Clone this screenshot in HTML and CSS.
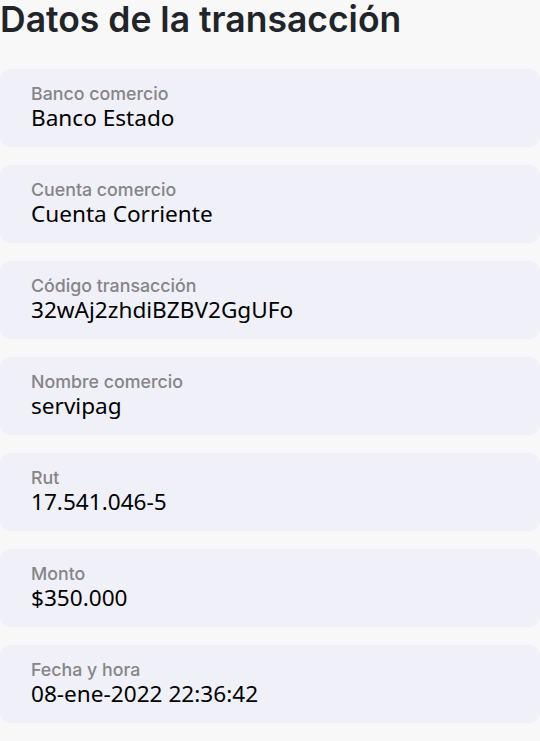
FILE: index.html
```html
<!DOCTYPE html>
<html lang="es">
<head>
<meta charset="utf-8">
<link rel="stylesheet" href="styles.css">
</head>
<body>
<main class="page">
  <h1 class="title">Datos de la transacción</h1>
  <div class="list">
    <div class="card"><div class="label">Banco comercio</div><div class="value">Banco Estado</div></div>
    <div class="card"><div class="label">Cuenta comercio</div><div class="value">Cuenta Corriente</div></div>
    <div class="card"><div class="label">Código transacción</div><div class="value">32wAj2zhdiBZBV2GgUFo</div></div>
    <div class="card"><div class="label">Nombre comercio</div><div class="value">servipag</div></div>
    <div class="card"><div class="label">Rut</div><div class="value">17.541.046-5</div></div>
    <div class="card"><div class="label">Monto</div><div class="value">$350.000</div></div>
    <div class="card"><div class="label">Fecha y hora</div><div class="value">08-ene-2022 22:36:42</div></div>
  </div>
</main>
</body>
</html>
```
FILE: styles.css
```css
html, body {
  margin: 0;
  padding: 0;
  background: #f8f8f8;
}
.page {
  width: 540px;
}
.title {
  margin: 0;
  font-family: Inter, "Liberation Sans", sans-serif;
  font-weight: 600;
  font-size: 35.5px;
  line-height: 40px;
  color: #212529;
  padding-bottom: 29px;
}
.list {
  display: flex;
  flex-direction: column;
  gap: 18px;
}
.card {
  background: #f0f0f8;
  border-radius: 10px;
  height: 78px;
  box-sizing: border-box;
  padding: 14px 31px 0;
}
.label {
  font-family: Inter, "Liberation Sans", sans-serif;
  font-weight: 500;
  font-size: 17.8px;
  line-height: 22px;
  color: #858585;
}
.value {
  font-family: "Noto Sans", "Open Sans", sans-serif;
  font-size: 22.6px;
  line-height: 25px;
  color: #000;
}
```
